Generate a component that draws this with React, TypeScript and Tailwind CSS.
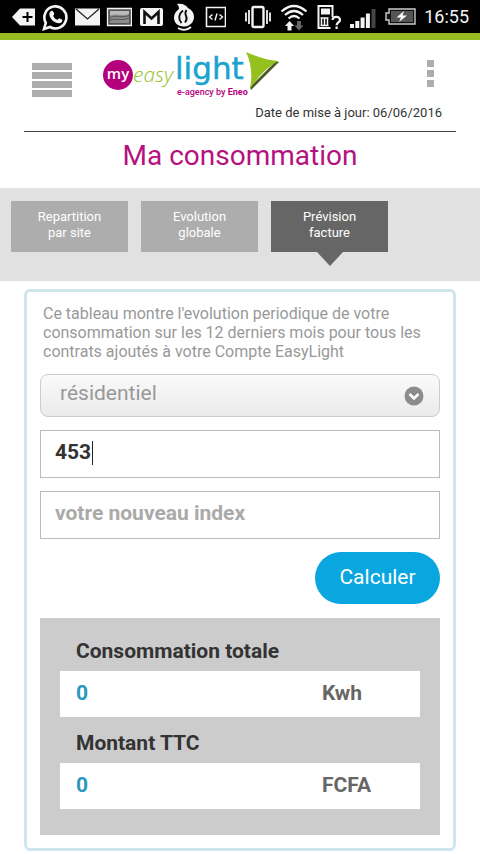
import React, { useState } from 'react';

const TABS = [
  { id: 'site', lines: ['Repartition', 'par site'] },
  { id: 'globale', lines: ['Evolution', 'globale'] },
  { id: 'facture', lines: ['Prévision', 'facture'] },
];

const RESULTS = [
  { id: 'conso', label: 'Consommation totale', value: '0', unit: 'Kwh' },
  { id: 'montant', label: 'Montant TTC', value: '0', unit: 'FCFA' },
];

const StatusBar: React.FC = () => (
  <div className="flex h-[33px] items-center justify-between bg-black pl-3 pr-[11px] text-white">
    <div className="flex items-center gap-[6px]">
      {/* delete / plus */}
      <svg width="24" height="26" viewBox="0 0 24 26">
        <path d="M0 13 8 4.500h15v17H8z" fill="#f4f4f4" />
        <path d="M15.500 8v10M10.500 13h10" stroke="#000" strokeWidth="2" />
      </svg>
      {/* whatsapp */}
      <svg width="26" height="28" viewBox="0 0 26 28">
        <path d="M2 26 3.800 19.800A11 11 0 1 1 8 24z" fill="none" stroke="#f4f4f4" strokeWidth="2.600" />
        <path d="M8.500 8.500c1.200-1.300 2.300-1 2.800.2l.9 2.100c.3.800-.9 1.600-1 2.100.9 1.900 2.400 3.200 4.200 3.900.7-.2 1.400-1.700 2.200-1.400l2.300 1.200c.8.500.5 1.900-.3 2.700-1.500 1.400-3.700 1.300-5.900.2-2.700-1.300-5-3.500-6-6.300-.6-1.800-.5-3.500.8-4.700z" fill="#f4f4f4" />
      </svg>
      {/* mail */}
      <svg width="26" height="26" viewBox="0 0 26 26">
        <path d="M1 4.500h25v17H1z" fill="#f4f4f4" />
        <path d="m2 5 11.500 10L25 5" fill="none" stroke="#222" strokeWidth="1.300" />
      </svg>
      {/* gallery */}
      <svg width="26" height="26" viewBox="0 0 26 26">
        <path d="M1.500 4.500h24v17h-24z" fill="#555" stroke="#f4f4f4" strokeWidth="1.300" />
        <path d="M4 7h19v12H4z" fill="#8b8b8b" />
        <path d="M4 7h19v3c-6 2.500-12-1-19 1.500z" fill="#bbb" />
        <path d="M4 13.500c6-3 12 1 19-2M4 16c7-2 12 1 19-2" fill="none" stroke="#555" />
      </svg>
      {/* gmail */}
      <svg width="26" height="26" viewBox="0 0 26 26">
        <rect x="2" y="4" width="23" height="18" rx="2" fill="#f4f4f4" />
        <path d="M6.500 20V8l7 6.500 7-6.500v12" fill="none" stroke="#111" strokeWidth="2.600" />
      </svg>
      {/* flame */}
      <svg width="26" height="28" viewBox="0 0 26 28">
        <path d="M7 1c5-1 9 1 11 4 4 2 6 5 6 9 0 5-4 9-9 9.500C8 24 4 20 4 14.500 4 11 6 8 9 6 9 4 8.500 2.500 7 1z" fill="#f4f4f4" />
        <path d="M13 7.500c-4.500 3.500-5 8.500-1.500 12.500M16.500 7c-4 5.500 3.500 6.500-1.500 12.500" fill="none" stroke="#111" strokeWidth="1.900" />
        <path d="M8 25c4 2.500 9 2.500 13-1" fill="none" stroke="#f4f4f4" strokeWidth="1.800" />
      </svg>
      {/* code */}
      <svg width="24" height="26" viewBox="0 0 24 26">
        <path d="M4.500 3.500h19v19h-19z" fill="none" stroke="#f4f4f4" strokeWidth="1.600" />
        <path d="m10.500 10.500-3 2.500 3 2.500m7-5 3 2.500-3 2.500M15 9.500l-2 7" fill="none" stroke="#f4f4f4" strokeWidth="1.400" />
      </svg>
    </div>
    <div className="flex items-center gap-2">
      {/* vibrate */}
      <svg width="28" height="26" viewBox="0 0 28 26">
        <rect x="8.500" y="3" width="11" height="20" rx="1.500" fill="none" stroke="#f4f4f4" strokeWidth="2.400" />
        <path d="M5 6v14M23 6v14M2 8.500v9M26 8.500v9" stroke="#f4f4f4" strokeWidth="1.800" />
      </svg>
      {/* wifi */}
      <svg width="28" height="28" viewBox="0 0 28 28">
        <path d="M1.500 8.500q12.500-11 25 0M5 12q9-8 18 0M8.500 15.500q5.500-5 11 0" fill="none" stroke="#f4f4f4" strokeWidth="2.300" />
        <path d="m9.500 18 4.500 5h-2.500v4.500h-4V23H5z" fill="#f4f4f4" />
        <path d="m19 27.500-4.500-5H17V18h4v4.500h2.500z" fill="#666" />
      </svg>
      {/* sim unknown */}
      <svg width="26" height="26" viewBox="0 0 26 26">
        <path d="M16.500 13V2h-14v22h12" fill="none" stroke="#f4f4f4" strokeWidth="2" />
        <path d="M5 4.500h9v6H5z" fill="#f4f4f4" />
        <path d="M5.500 14v7.500M8.500 14v7.500M11.500 14v7.500M4.500 21.500h8M4.500 14h8" stroke="#f4f4f4" strokeWidth="1.500" />
        <path d="M16.500 16c.5-4.500 8-4 7.500.3-.4 2.300-3.300 2.200-3.400 5M20.600 22.500V25" fill="none" stroke="#f4f4f4" strokeWidth="2.200" />
      </svg>
      {/* signal */}
      <svg width="26" height="26" viewBox="0 0 26 26">
        <path d="M0 20h4v4H0zM5.300 17h4v7h-4zM10.600 13.500h4V24h-4zM15.900 9.500h4V24h-4z" fill="#f4f4f4" />
        <path d="M21.500 5h4v19h-4z" fill="#444" />
      </svg>
      {/* battery */}
      <svg width="32" height="26" viewBox="0 0 32 26">
        <path d="M5 5h26v15H5v-4H2V9h3z" fill="#111" stroke="#ccc" strokeWidth="1.400" />
        <path d="M7 7h22v11H7z" fill="#555" />
        <path d="m20 7-7.500 6.500H17L15 18l8-6.500h-4.500z" fill="#fff" />
      </svg>
      <span className="text-lg text-gray-100">16:55</span>
    </div>
  </div>
);

const Logo: React.FC = () => (
  <svg width="178" height="48" viewBox="0 0 178 48" role="img" aria-label="my easylight">
    <circle cx="16" cy="24" r="15" fill="#b5007e" />
    <text x="16" y="28" textAnchor="middle" fontFamily="Open Sans, sans-serif" fontSize="15" fontWeight="600" fill="#fff">my</text>
    <text x="31" y="31" fontFamily="Open Sans, sans-serif" fontSize="21" fontWeight="300" fontStyle="italic" fill="#95bf1f">easy</text>
    <text x="73" y="28" fontFamily="DejaVu Sans, sans-serif" fontSize="31" fill="#1ba3cf" stroke="#1ba3cf" strokeWidth="0.500">light</text>
    <text x="75" y="44" fontFamily="Roboto, sans-serif" fontSize="9" fontWeight="500" fill="#b5007e">
      e-agency by <tspan fontWeight="700">Eneo</tspan>
    </text>
    <path d="m177 11-28 28-1-3 26-26z" fill="#4d5b28" />
    <path d="M144 1q18 8 32 9-16 9-28 28 4-20-4-37z" fill="#95c11f" />
  </svg>
);

const Header: React.FC = () => (
  <header className="mx-6 border-b border-[#444] pb-2">
    <div className="flex items-start px-2 pt-[11px]">
      <button type="button" aria-label="Menu" className="mt-3 flex w-10 flex-col gap-[2px]">
        {[0, 1, 2, 3].map((i) => (
          <span key={i} className="h-[7px] w-full bg-[#adadad]"></span>
        ))}
      </button>
      <div className="ml-[30px]">
        <Logo />
      </div>
      <button type="button" aria-label="Options" className="ml-auto mr-[14px] mt-[9px] flex flex-col gap-[3px]">
        {[0, 1, 2].map((i) => (
          <span key={i} className="size-[7px] bg-[#adadad]"></span>
        ))}
      </button>
    </div>
    <p className="mt-1 pr-[14px] text-right text-[13px] leading-5 text-[#333]">Date de mise à jour: 06/06/2016</p>
  </header>
);

const App: React.FC = () => {
  const [activeTab, setActiveTab] = useState('facture');
  const [ancienIndex, setAncienIndex] = useState('453');
  const [nouvelIndex, setNouvelIndex] = useState('');

  return (
    <div className="min-h-screen bg-white pb-[3px] font-['Roboto',sans-serif]">
      <StatusBar />
      <div className="h-[7px] bg-[#97bb22]"></div>
      <Header />

      <h1 className="pb-3 pt-1 text-center text-[28px] leading-10 text-[#b5127f]">Ma consommation</h1>

      <nav className="flex gap-[13px] bg-[#e1e1e1] px-[11px] pb-[29px] pt-[13px]">
        {TABS.map((tab) => (
          <button
            key={tab.id}
            type="button"
            onClick={() => setActiveTab(tab.id)}
            className={`relative h-[51px] w-[117px] text-[13px] leading-4 text-white ${
              activeTab === tab.id ? 'bg-[#666]' : 'bg-[#adadad]'
            }`}
          >
            <span className="block pb-1">
              {tab.lines[0]}
              <br />
              {tab.lines[1]}
            </span>
            {activeTab === tab.id && (
              <span className="absolute left-1/2 top-full -translate-x-1/2 border-x-[13px] border-t-[14px] border-x-transparent border-t-[#666]"></span>
            )}
          </button>
        ))}
      </nav>

      <main className="mx-6 mt-2 rounded-md border-[3px] border-[#cfe6ed] px-[13px] pb-[13px] pt-3">
        <p className="px-[3px] text-base leading-[19px] text-[#999]">
          Ce tableau montre l'evolution periodique de votre consommation sur les 12 derniers mois pour tous les contrats ajoutés à votre Compte EasyLight
        </p>

        <form onSubmit={(e) => e.preventDefault()} className="mt-[13px] flex flex-col gap-[13px]">
          <div className="relative">
            <select
              aria-label="Type de contrat"
              className="block h-[43px] w-full appearance-none rounded-lg border border-[#ccc] bg-linear-to-b from-[#fafafa] to-[#ebebeb] px-[19px] pb-1 text-[21px] text-[#999]"
            >
              <option>résidentiel</option>
              <option>professionnel</option>
            </select>
            <svg className="pointer-events-none absolute right-4 top-3" width="20" height="20" viewBox="0 0 20 20">
              <circle cx="10" cy="10" r="9.500" fill="#8c8c8c" />
              <path d="m5.500 8 4.500 4.500L14.500 8" fill="none" stroke="#fff" strokeWidth="2.600" />
            </svg>
          </div>

          <div className="relative">
            <input
              aria-label="votre ancien index"
              value={ancienIndex}
              onChange={(e) => setAncienIndex(e.target.value)}
              className="block h-12 w-full border border-[#bbb] px-[14px] pb-1 text-[21px] font-bold text-[#333] outline-none"
            />
            <span className="absolute left-[52px] top-[11px] h-6 w-px bg-[#222]"></span>
          </div>

          <input
            aria-label="votre nouveau index"
            placeholder="votre nouveau index"
            value={nouvelIndex}
            onChange={(e) => setNouvelIndex(e.target.value)}
            className="block h-12 w-full border border-[#bbb] px-[14px] pb-1 text-[21px] font-bold text-[#333] outline-none placeholder:text-[#aaa]"
          />

          <button type="submit" className="h-[52px] w-[125px] self-end rounded-full bg-[#0aa6e0] text-[21px] text-white">
            Calculer
          </button>
        </form>

        <section className="mt-[14px] bg-[#ccc] px-5 pb-[26px] pt-[7px]">
          {RESULTS.map((r) => (
            <div key={r.id}>
              <h2 id={r.id} className="px-4 pb-1 pt-[10px] text-[21px] font-bold leading-8 text-[#333]">{r.label}</h2>
              <div aria-labelledby={r.id} className="flex h-[46px] items-center bg-white px-4 text-[21px] font-bold">
                <span className="flex-1 text-[#2a97bd]">{r.value}</span>
                <span className="w-[82px] text-[#666]">{r.unit}</span>
              </div>
            </div>
          ))}
        </section>
      </main>
    </div>
  );
};

export default App;
